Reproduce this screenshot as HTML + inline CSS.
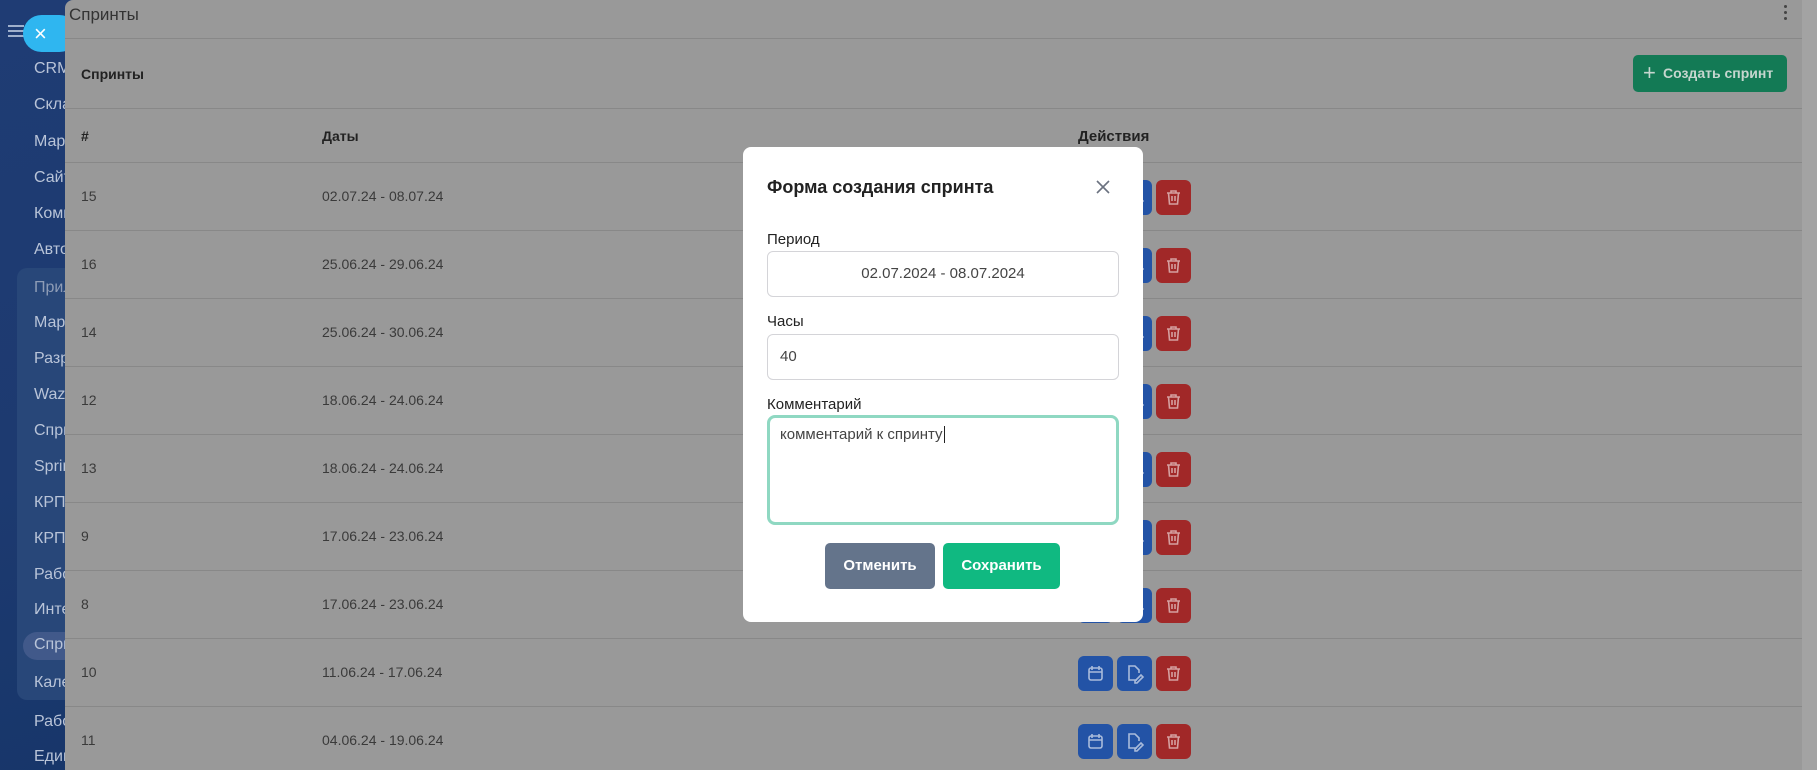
<!DOCTYPE html>
<html><head><meta charset="utf-8"><style>
*{margin:0;padding:0;box-sizing:border-box}
body{width:1817px;height:770px;overflow:hidden;background:#1c396f;font-family:"Liberation Sans","Noto Sans CJK SC",sans-serif;position:relative}
.sb{position:absolute;left:0;top:0;width:80px;height:770px;background:linear-gradient(160deg,#1f3c74 0%,#1d3a70 60%,#17366a 100%)}
.rs{position:absolute;left:1790px;top:0;width:27px;height:770px;background:#a3a3a3}
.grp{position:absolute;left:17px;top:268px;width:70px;height:432px;background:#284779;border-radius:10px}
.it{position:absolute;left:34px;font-size:16px;color:#b9c4d8;white-space:nowrap}
.pill{position:absolute;left:23px;top:632px;width:60px;height:28px;border-radius:14px;background:#41598a}
.xb{position:absolute;left:23px;top:15px;width:55px;height:37px;border-radius:19px;background:#2fb6f0;color:#fff;font-size:22px;line-height:37px;padding-left:11px}
.ham{position:absolute;left:8px;top:25px;width:16px;height:2px;background:#9fb0cc;box-shadow:0 5px 0 #9fb0cc,0 10px 0 #9fb0cc}
.main{position:absolute;left:65px;top:0;width:1737px;height:770px;background:#999;border-radius:8px 0 0 0}
.t1{position:absolute;left:4px;top:5px;font-size:17px;color:#333}
.ln{position:absolute;left:0;width:1737px;height:1px;background:#888}
.b{font-weight:bold;color:#222;font-size:14px;position:absolute}
.cell{position:absolute;font-size:14px;color:#3a3a3a}
.cb{position:absolute;left:1568px;top:55px;width:154px;height:37px;background:#137a55;border-radius:5px;color:#c6d6cf;font-weight:bold;font-size:14px;line-height:37px;padding-left:30px}
.cb:before{content:"+";position:absolute;left:10px;top:-1px;font-size:22px;font-weight:normal}
.ab{position:absolute;width:35px;height:35px;border-radius:6px}
.modal{position:absolute;left:743px;top:147px;width:400px;height:475px;background:#fff;border-radius:8px}
.lbl{position:absolute;left:24px;font-size:15px;color:#222;font-weight:500}
.inp{position:absolute;left:24px;width:352px;height:46px;border:1px solid #d4d4d8;border-radius:6px;font-size:15px;color:#444}
.btn{position:absolute;top:396px;height:46px;border-radius:5px;color:#fff;font-weight:bold;font-size:15px;text-align:center;line-height:46px}
</style></head><body>
<div class="sb"></div>
<div class="rs"></div>
<div class="grp"></div>
<div class="pill"></div>
<div class="ham"></div>
<div class="it" style="top:60px">CRM</div>
<div class="it" style="top:96px">Склад</div>
<div class="it" style="top:133px">Маркет</div>
<div class="it" style="top:169px">Сайты</div>
<div class="it" style="top:205px">Комп</div>
<div class="it" style="top:241px">Авто</div>
<div class="it" style="top:279px;color:#8e9cb6">Прил</div>
<div class="it" style="top:314px">Марк</div>
<div class="it" style="top:350px">Разр</div>
<div class="it" style="top:386px">Wazz</div>
<div class="it" style="top:422px">Спри</div>
<div class="it" style="top:458px">Sprin</div>
<div class="it" style="top:494px">КРП</div>
<div class="it" style="top:530px">КРП2</div>
<div class="it" style="top:566px">Рабо</div>
<div class="it" style="top:601px">Инте</div>
<div class="it" style="top:636px">Спри</div>
<div class="it" style="top:674px">Кале</div>
<div class="it" style="top:713px">Рабо</div>
<div class="it" style="top:748px">Един</div>
<div class="xb">×</div>
<div class="main">
<div class="t1">Спринты</div>
<div style="position:absolute;left:1719px;top:5px;width:3px;height:3px;background:#444;border-radius:50%;box-shadow:0 6px 0 #444,0 12px 0 #444"></div>
<div class="ln" style="top:38px"></div>
<div class="b" style="left:16px;top:66px">Спринты</div>
<div class="cb">Создать спринт</div>
<div class="ln" style="top:108px"></div>
<div class="b" style="left:16px;top:128px">#</div>
<div class="b" style="left:257px;top:128px">Даты</div>
<div class="b" style="left:1013px;top:128px;font-size:15px">Действия</div>
<div class="ln" style="top:162px"></div>
</div>
<div id="rows"></div>
<script>
var d=[["15","02.07.24 - 08.07.24"],["16","25.06.24 - 29.06.24"],["14","25.06.24 - 30.06.24"],["12","18.06.24 - 24.06.24"],["13","18.06.24 - 24.06.24"],["9","17.06.24 - 23.06.24"],["8","17.06.24 - 23.06.24"],["10","11.06.24 - 17.06.24"],["11","04.06.24 - 19.06.24"]];
var h="";
var cal='<svg width="35" height="35" viewBox="0 0 35 35" fill="none" stroke="#a9bbdb" stroke-width="1.6"><rect x="11" y="12" width="13" height="12" rx="2"/><path d="M11 16h13M14 10v4M21 10v4"/></svg>';
var ed='<svg width="35" height="35" viewBox="0 0 35 35" fill="none" stroke="#a9bbdb" stroke-width="1.6"><path d="M20 24h-8v-14h6l4 4v3"/><path d="M18 25l6-6 2 2-6 6h-2z"/></svg>';
var tr='<svg width="35" height="35" viewBox="0 0 35 35" fill="none" stroke="#d5a0a0" stroke-width="1.6"><path d="M11 13h13M15 13v-2h5v2M12.5 13l1 11h8l1-11M16 16v5M19 16v5"/></svg>';
for(var i=0;i<d.length;i++){var c=197+68*i;
h+='<div class="cell" style="left:81px;top:'+(c-9)+'px">'+d[i][0]+'</div><div class="cell" style="left:322px;top:'+(c-9)+'px">'+d[i][1]+'</div>';
h+='<div class="ab" style="left:1078px;top:'+(c-17)+'px;background:#2353a6">'+cal+'</div><div class="ab" style="left:1117px;top:'+(c-17)+'px;background:#2353a6">'+ed+'</div><div class="ab" style="left:1156px;top:'+(c-17)+'px;background:#a12828">'+tr+'</div>';
if(i<8)h+='<div style="position:absolute;left:65px;width:1737px;height:1px;background:#888;top:'+(c+33)+'px"></div>';}
document.getElementById("rows").innerHTML=h;
</script>
<div class="modal">
<div style="position:absolute;left:24px;top:30px;font-size:18px;font-weight:bold;color:#222">Форма создания спринта</div>
<svg style="position:absolute;left:352px;top:32px" width="16" height="16" viewBox="0 0 16 16" stroke="#6b7280" stroke-width="1.6"><path d="M2 2l12 12M14 2L2 14"/></svg>
<div class="lbl" style="top:84px">Период</div>
<div class="inp" style="top:104px;text-align:center;line-height:44px">02.07.2024 - 08.07.2024</div>
<div class="lbl" style="top:166px">Часы</div>
<div class="inp" style="top:187px;line-height:44px;padding-left:12px">40</div>
<div class="lbl" style="top:249px">Комментарий</div>
<div class="inp" style="top:268px;height:110px;border:3px solid #8fd8c2;border-radius:8px;padding:8px 10px">комментарий к спринту<span style="border-left:1px solid #222;margin-left:1px"></span></div>
<div class="btn" style="left:82px;width:110px;background:#64748b">Отменить</div>
<div class="btn" style="left:200px;width:117px;background:#10b981">Сохранить</div>
</div>
</body></html>
